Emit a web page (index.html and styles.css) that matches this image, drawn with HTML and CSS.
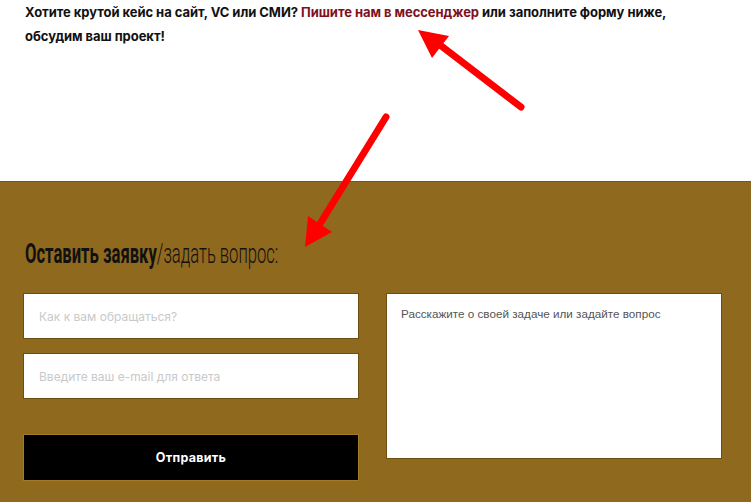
FILE: index.html
```html
<!DOCTYPE html>
<html lang="ru">
<head>
<meta charset="utf-8">
<title>Заявка</title>
<link rel="stylesheet" href="styles.css">
</head>
<body>
<div class="page">
  <section class="intro">
    <p class="intro-text">Хотите крутой кейс на сайт, VC или СМИ? <a class="intro-link" href="#">Пишите нам в мессенджер</a> или заполните форму ниже, обсудим ваш проект!</p>
  </section>
  <section class="request">
    <h2 class="request-title"><span class="title-strong">Оставить заявку</span>/задать вопрос:</h2>
    <form class="request-form">
      <div class="form-col">
        <input class="field" type="text" placeholder="Как к вам обращаться?">
        <input class="field" type="email" placeholder="Введите ваш e-mail для ответа">
        <button class="submit" type="button">Отправить</button>
      </div>
      <div class="form-col">
        <textarea class="message" placeholder="Расскажите о своей задаче или задайте вопрос"></textarea>
      </div>
    </form>
  </section>
  <svg class="arrows" width="751" height="502" viewBox="0 0 751 502" aria-hidden="true">
    <line x1="521" y1="107" x2="440" y2="45" stroke="#ff0000" stroke-width="7" stroke-linecap="round"/>
    <polygon points="418,30 449,36 432,58" fill="#ff0000"/>
    <line x1="386" y1="117" x2="318" y2="227" stroke="#ff0000" stroke-width="7" stroke-linecap="round"/>
    <polygon points="305,247 308,216 332,232" fill="#ff0000"/>
  </svg>
</div>
</body>
</html>
```
FILE: styles.css
```css
html, body {
  margin: 0;
  padding: 0;
  background: #ffffff;
}
.page {
  position: relative;
  width: 751px;
  height: 502px;
  overflow: hidden;
}
.intro {
  height: 181px;
  box-sizing: border-box;
  padding: 0 60px 0 25px;
}
.intro-text {
  margin: 0;
  font-family: "Inter", "Open Sans", sans-serif;
  font-weight: 700;
  font-size: 13px;
  line-height: 24px;
  letter-spacing: -0.05px;
  color: #111111;
}
.intro-link {
  color: #7f1020;
  text-decoration: none;
}
.request {
  height: 321px;
  box-sizing: border-box;
  background: #8f691e;
  border-top: 1px solid #7a5515;
  padding: 58px 29px 0 23px;
}
.request-title {
  display: block;
  height: 28px;
  margin: 0 0 25px 2px;
  font-family: "Roboto", "Liberation Sans", sans-serif;
  font-weight: 300;
  font-size: 27px;
  line-height: 28px;
  color: #111111;
  transform: scaleX(0.615);
  transform-origin: left center;
  white-space: nowrap;
}
.title-strong {
  font-weight: 700;
}
.request-form {
  display: grid;
  grid-template-columns: 336px 336px;
  column-gap: 27px;
}
.form-col {
  display: flex;
  flex-direction: column;
}
.field {
  box-sizing: border-box;
  height: 46px;
  margin: 0 0 14px 0;
  padding: 0 15px;
  border: 1px solid #6e4d10;
  background: #ffffff;
  font-family: "Inter", "Open Sans", sans-serif;
  font-size: 12px;
  outline: none;
}
.field::placeholder {
  color: #c9c9c9;
}
.submit {
  box-sizing: border-box;
  height: 47px;
  margin-top: 21px;
  border: 1px solid #a47a2a;
  background: #000000;
  color: #ffffff;
  font-family: "Inter", "Open Sans", sans-serif;
  font-weight: 700;
  font-size: 12.5px;
  letter-spacing: 0.3px;
}
.message {
  box-sizing: border-box;
  height: 166px;
  padding: 13px 14px;
  border: 1px solid #6e4d10;
  background: #ffffff;
  resize: none;
  font-family: "Liberation Sans", Arial, sans-serif;
  font-size: 11.7px;
  outline: none;
}
.message::placeholder {
  color: #555555;
}
.arrows {
  position: absolute;
  left: 0;
  top: 0;
  pointer-events: none;
}
```
